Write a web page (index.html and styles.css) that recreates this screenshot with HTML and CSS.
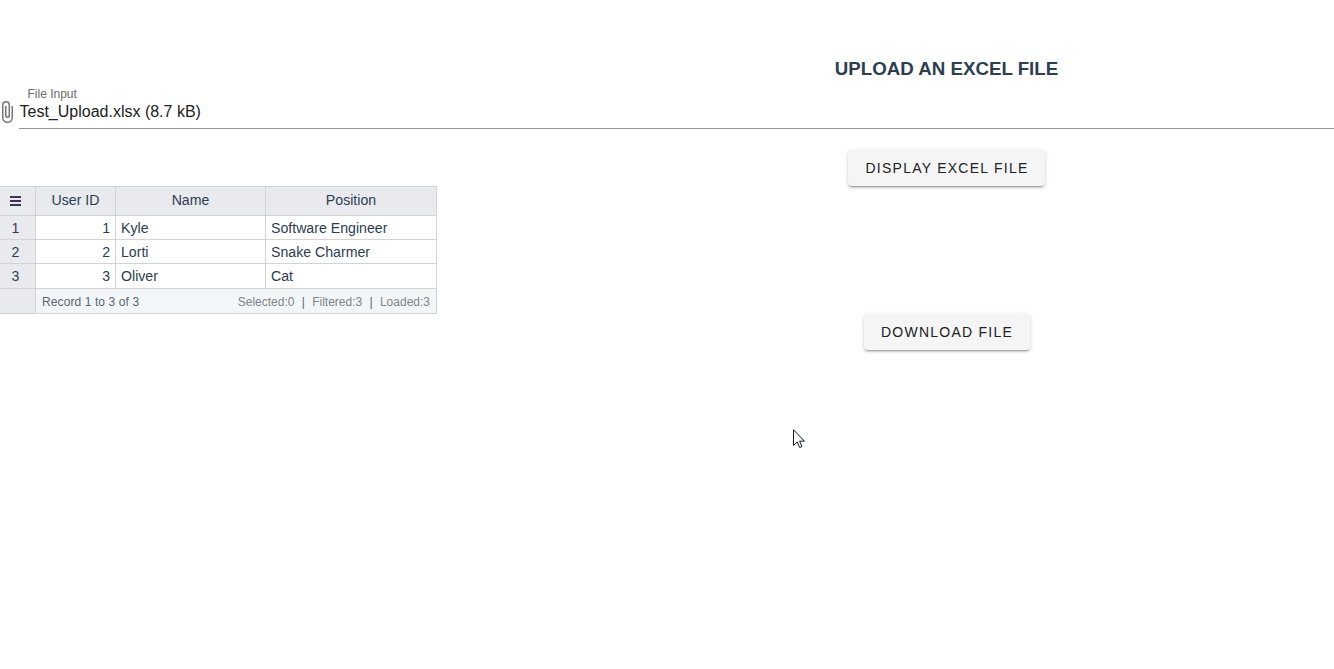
FILE: index.html
```html
<!DOCTYPE html>
<html lang="en">
<head>
<meta charset="utf-8">
<title>Upload an Excel File</title>
<link rel="stylesheet" href="styles.css">
</head>
<body>
<div class="viewport">
<main class="page">
  <h3 class="title">UPLOAD AN EXCEL FILE</h3>
  <div class="file-input">
    <svg class="clip" viewBox="6 0 12 24"><path d="M16.5 6v11.500a4 4 0 0 1-8 0V5a2.500 2.500 0 0 1 5 0v10.500a1 1 0 0 1-2 0V6H10v9.500a2.500 2.500 0 0 0 5 0V5a4 4 0 0 0-8 0v12.500a5.500 5.500 0 0 0 11 0V6z"/></svg>
    <div class="field">
      <label class="field-label">File Input</label>
      <div class="field-value">Test_Upload.xlsx (8.7 kB)</div>
    </div>
  </div>
  <button class="btn btn-display">DISPLAY EXCEL FILE</button>
  <table class="grid">
    <colgroup><col class="c-num"><col class="c-id"><col class="c-name"><col class="c-pos"></colgroup>
    <thead>
      <tr><th><svg class="menu" viewBox="0 0 11 10"><path d="M0 1h11M0 9h11"/><path class="mid" d="M0 5h11"/></svg></th><th>User ID</th><th>Name</th><th>Position</th></tr>
    </thead>
    <tbody>
      <tr><th>1</th><td class="num">1</td><td>Kyle</td><td>Software Engineer</td></tr>
      <tr><th>2</th><td class="num">2</td><td>Lorti</td><td>Snake Charmer</td></tr>
      <tr class="last"><th>3</th><td class="num">3</td><td>Oliver</td><td>Cat</td></tr>
    </tbody>
    <tfoot>
      <tr><th></th><td colspan="3"><div class="summary"><span class="record">Record 1 to 3 of 3</span><span class="counts"><span>Selected:0</span><span class="bar">|</span><span>Filtered:3</span><span class="bar">|</span><span>Loaded:3</span></span></div></td></tr>
    </tfoot>
  </table>
  <button class="btn btn-download">DOWNLOAD FILE</button>
</main>
</div>
<svg class="cursor" viewBox="0 0 12 20"><path d="M.5 .8v15.700l3.700-3.500 2.500 5.500 2.300-1-2.400-5.300h4.900z"/></svg>
</body>
</html>
```
FILE: styles.css
```css
body {
  margin: 0;
  background: #fff;
  color: #2c3e50;
  font-family: "Liberation Sans", Arial, sans-serif;
}
.viewport { height: 100vh; overflow: hidden; }
.page {
  display: flex;
  flex-direction: column;
  align-items: center;
  width: 1893px;
  padding-top: 56px;
}
.title { margin: 0; padding-top: 1px; font-size: 18.72px; line-height: 23px; }
.file-input {
  display: flex;
  align-self: stretch;
  height: 49px;
}
.clip { width: 12px; height: 24px; margin: 20px 6px 0 1px; fill: #757575; flex: none; }
.field {
  flex: 1;
  box-sizing: border-box;
  height: 49px;
  padding-top: 6px;
  border-bottom: 1px solid #949494;
}
.field-label { display: block; padding-left: 8.500px; font-size: 12px; line-height: 16px; color: #6c6c6c; }
.field-value { padding-left: .5px; font-size: 16px; line-height: 20px; color: #212121; }
.btn {
  height: 36px;
  padding: 0 16px;
  border: 0;
  border-radius: 4px;
  background: #f5f5f5;
  color: #212121;
  font: 14px/36px "Liberation Sans", Arial, sans-serif;
  letter-spacing: 1.25px;
  text-indent: 1px;
  white-space: nowrap;
  box-shadow: 0 3px 1px -2px rgba(0,0,0,.2), 0 2px 2px 0 rgba(0,0,0,.14), 0 1px 5px 0 rgba(0,0,0,.12);
}
.btn-display { width: 197px; margin-top: 21px; }
.btn-download { width: 166px; }
.grid {
  align-self: flex-start;
  width: 437px;
  table-layout: fixed;
  border-collapse: separate;
  border-spacing: 0;
  border-top: 1px solid #d3d3d3;
  font-size: 14.15px;
}
.c-num { width: 36px; }
.c-id { width: 80px; }
.c-name { width: 150px; }
.c-pos { width: 171px; }
.grid th, .grid td {
  box-sizing: border-box;
  height: 24px;
  padding: 0 5px;
  border-right: 1px solid #d3d3d3;
  border-bottom: 1px solid #d3d3d3;
  line-height: 22px;
  font-weight: normal;
  text-align: left;
}
.grid th { background: #e9eaee; text-align: center; }
.grid tbody th, .grid thead th:first-child { padding-right: 9px; }
.grid thead th { height: 29px; padding-bottom: 2px; }
.grid .num { text-align: right; }
.grid .last th, .grid .last td { height: 25px; }
.grid tfoot th, .grid tfoot td { height: 25px; }
.grid tfoot td { padding: 1px 6px 0; background: #f2f6f9; font-size: 12px; color: #5a6470; }
.menu { display: block; width: 11px; height: 10px; margin: 1px auto 0; fill: none; stroke: #2c3e50; stroke-width: 2; }
.menu .mid { stroke: #4a2a60; }
.summary { display: flex; justify-content: space-between; }
.record { letter-spacing: .1px; }
.counts { display: flex; gap: 7.300px; color: #808487; }
.bar { color: #5a6470; }
.cursor {
  position: absolute;
  left: 793px;
  top: 429px;
  width: 12px;
  height: 20px;
  fill: #fff;
  stroke: #101828;
  stroke-width: 1;
}
```
